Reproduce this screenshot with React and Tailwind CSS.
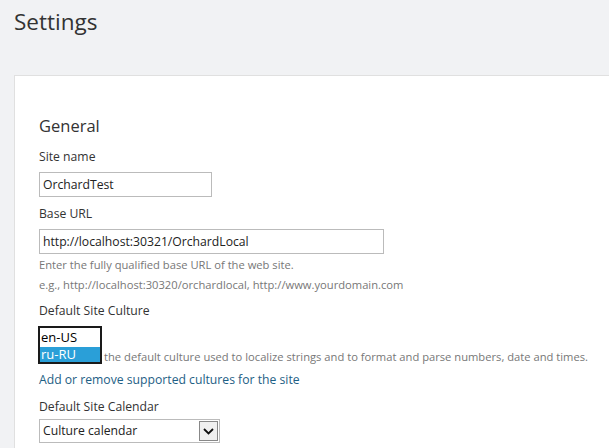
export default function App() {
  const font = { fontFamily: '"Open Sans", "Noto Sans", sans-serif' }
  return (
    <div className="h-[448px] w-[609px] overflow-hidden bg-[#f1f2f4] text-[#333]" style={font}>
      <h1 className="px-[14px] pt-[4px] text-[22.5px] leading-[36px] text-[#333]">Settings</h1>

      <div className="ml-[14px] mt-[35px] h-[400px] border-l border-t border-[#e0e0e0] bg-white pl-[24px] pt-[38px]">
        <h2 className="text-[16.5px] leading-[24px] text-[#333]">General</h2>

        <div className="mt-[10px] text-[12.2px] leading-[18px]">Site name</div>
        <input
          readOnly
          value="OrchardTest"
          className="mt-[6px] block h-[25px] w-[173px] border border-[#bbb] px-[3px] text-[12.2px] text-[#222] outline-none"
        />

        <div className="mt-[8px] text-[12.2px] leading-[18px]">Base URL</div>
        <input
          readOnly
          value="http://localhost:30321/OrchardLocal"
          className="mt-[6px] block h-[25px] w-[345px] border border-[#bbb] px-[3px] text-[12.2px] text-[#222] outline-none"
        />
        <p className="mt-[1px] text-[11.2px] leading-[20px] text-[#777]">Enter the fully qualified base URL of the web site.</p>
        <p className="text-[11.2px] leading-[20px] text-[#777]">e.g., http://localhost:30320/orchardlocal, http://www.yourdomain.com</p>

        <div className="mt-[7px] text-[12.2px] leading-[18px]">Default Site Culture</div>
        <div className="mt-[6px] flex items-end">
          <div className="-ml-[1px] w-[64px] border-2 border-[#1a1a1a] bg-white text-[13px]">
            <div className="flex h-[19px] items-center px-[1px] text-black">en-US</div>
            <div className="flex h-[15px] items-center bg-[#2a9fd8] px-[1px] text-white">ru-RU</div>
          </div>
          <span className="ml-[2px] text-[11.2px] leading-[14px] text-[#777]">
            the default culture used to localize strings and to format and parse numbers, date and times.
          </span>
        </div>
        <a className="mt-[6px] block text-[12.2px] leading-[20px] text-[#1e6085]">Add or remove supported cultures for the site</a>

        <div className="mt-[8px] text-[12.2px] leading-[18px]">Default Site Calendar</div>
        <div className="mt-[3px] flex h-[24px] w-[181px] items-center justify-between border border-[#bbb] bg-white pl-[3px] pr-[1px]">
          <span className="text-[12.2px] leading-[16px] text-[#222]">Culture calendar</span>
          <span className="flex h-[20px] w-[19px] items-center justify-center border border-[#888] bg-[#f0f0f0]">
            <svg width="11" height="7" viewBox="0 0 11 7" fill="none">
              <path d="M1 1l4.5 4.5L10 1" stroke="#111" strokeWidth="1.8" />
            </svg>
          </span>
        </div>
      </div>
    </div>
  )
}
